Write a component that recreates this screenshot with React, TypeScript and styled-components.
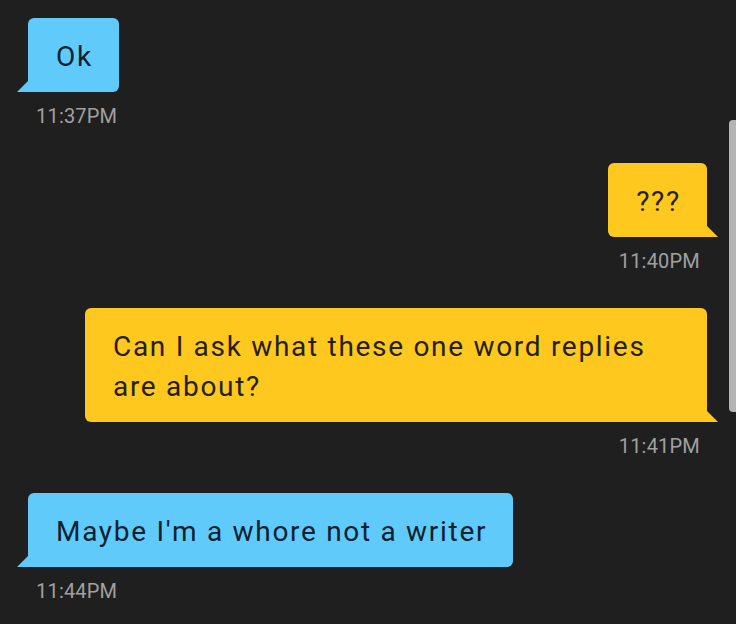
import styled, { createGlobalStyle } from "styled-components";

const GlobalStyle = createGlobalStyle`
  html, body {
    margin: 0;
    padding: 0;
    background: #1f1f1f;
  }
  body {
    font-family: Roboto, "Liberation Sans", sans-serif;
  }
`;

type Side = "in" | "out";

const SThread = styled.div`
  position: relative;
  width: 736px;
  height: 624px;
  overflow: hidden;
  background: #1f1f1f;
  box-sizing: border-box;
  padding: 18px 29px 0 28px;
  display: flex;
  flex-direction: column;
  gap: 35px;
`;

const SMessage = styled.div<{ $side: Side }>`
  display: flex;
  flex-direction: column;
  align-items: ${({ $side }) => ($side === "in" ? "flex-start" : "flex-end")};
`;

const SBubble = styled.div<{ $side: Side }>`
  position: relative;
  box-sizing: border-box;
  max-width: 622px;
  padding: 19px 26px 15px 28px;
  font-size: 28px;
  font-weight: 400;
  line-height: 40px;
  letter-spacing: 1.7px;
  background: ${({ $side }) => ($side === "in" ? "#60cbfb" : "#fec81f")};
  color: ${({ $side }) => ($side === "in" ? "#0e2130" : "#251f0e")};
  border-radius: ${({ $side }) => ($side === "in" ? "6px 6px 6px 0" : "6px 6px 0 6px")};

  &::after {
    content: "";
    position: absolute;
    bottom: 0;
    width: 11px;
    height: 11px;
    background: inherit;
    ${({ $side }) =>
      $side === "in"
        ? "left: -11px; clip-path: polygon(100% 0, 100% 100%, 0 100%);"
        : "right: -11px; clip-path: polygon(0 0, 100% 100%, 0 100%);"}
  }
`;

const STime = styled.div`
  margin-top: 12px;
  padding: 0 7px 0 8px;
  font-size: 20px;
  line-height: 24px;
  letter-spacing: 0.2px;
  color: #a0a0a0;
`;

const SScrollThumb = styled.div`
  position: absolute;
  right: 0;
  top: 120px;
  width: 7px;
  height: 292px;
  border-radius: 4px 0 0 4px;
  background: #b4b4b4;
`;

const messages: { side: Side; text: string; time: string }[] = [
  { side: "in", text: "Ok", time: "11:37PM" },
  { side: "out", text: "???", time: "11:40PM" },
  { side: "out", text: "Can I ask what these one word replies are about?", time: "11:41PM" },
  { side: "in", text: "Maybe I'm a whore not a writer", time: "11:44PM" },
];

export default function App() {
  return (
    <>
      <GlobalStyle />
      <SThread>
        {messages.map((m) => (
          <SMessage key={m.time} $side={m.side}>
            <SBubble $side={m.side}>{m.text}</SBubble>
            <STime>{m.time}</STime>
          </SMessage>
        ))}
        <SScrollThumb />
      </SThread>
    </>
  );
}
